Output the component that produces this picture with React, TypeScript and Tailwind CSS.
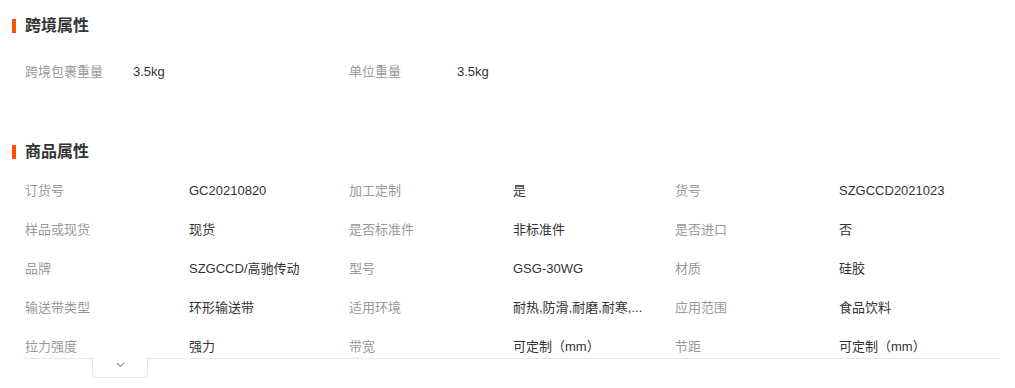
const font = { fontFamily: '"Liberation Sans", "Noto Sans CJK SC", sans-serif' };

const crossBorder = [
  { label: "跨境包裹重量", value: "3.5kg" },
  { label: "单位重量", value: "3.5kg" },
];

const attrs = [
  { label: "订货号", value: "GC20210820" },
  { label: "加工定制", value: "是" },
  { label: "货号", value: "SZGCCD2021023" },
  { label: "样品或现货", value: "现货" },
  { label: "是否标准件", value: "非标准件" },
  { label: "是否进口", value: "否" },
  { label: "品牌", value: "SZGCCD/高驰传动" },
  { label: "型号", value: "GSG-30WG" },
  { label: "材质", value: "硅胶" },
  { label: "输送带类型", value: "环形输送带" },
  { label: "适用环境", value: "耐热,防滑,耐磨,耐寒,..." },
  { label: "应用范围", value: "食品饮料" },
  { label: "拉力强度", value: "强力" },
  { label: "带宽", value: "可定制（mm）" },
  { label: "节距", value: "可定制（mm）" },
];

function SectionTitle({ title }: { title: string }) {
  return (
    <div className="flex h-5 items-center gap-[9px]">
      <span className="h-[14px] w-1 bg-[#ff5000]" />
      <h3 className="text-[16px] font-bold leading-5 text-[#333]">{title}</h3>
    </div>
  );
}

export default function App() {
  return (
    <div className="h-[388px] w-[1015px] overflow-hidden bg-white pl-3 text-[13px]" style={font}>
      <div className="pt-4">
        <SectionTitle title="跨境属性" />
      </div>
      <div className="ml-[11px] mt-4 flex h-[39px] items-center pl-[2px]">
        {crossBorder.map((a) => (
          <div key={a.label} className="flex w-[324px] items-center">
            <span className="w-[108px] text-[#999]">{a.label}</span>
            <span className="text-[#333]">{a.value}</span>
          </div>
        ))}
      </div>

      <div className="mt-[51px]">
        <SectionTitle title="商品属性" />
      </div>
      <div className="ml-[11px] mt-[9px] w-[977px]">
        <div className="h-[188px] overflow-hidden border-b border-[#e8e8e8] pl-[2px]">
          <div className="grid grid-cols-[324px_326px_1fr]">
            {attrs.map((a) => (
              <div key={a.label} className="flex h-[39px] items-center">
                <span className="w-[164px] shrink-0 text-[#999]">{a.label}</span>
                <span className="truncate text-[#333]">{a.value}</span>
              </div>
            ))}
          </div>
        </div>
        <button className="relative -mt-px ml-[69px] flex h-[20px] w-[56px] items-start justify-center rounded-b-[4px] border border-t-0 border-[#e8e8e8] bg-white pt-[4px]">
          <svg width="9" height="6" viewBox="0 0 9 6" fill="none">
            <polyline points="1,1 4.5,4.5 8,1" stroke="#999" strokeWidth="1.2" />
          </svg>
        </button>
      </div>
    </div>
  );
}
